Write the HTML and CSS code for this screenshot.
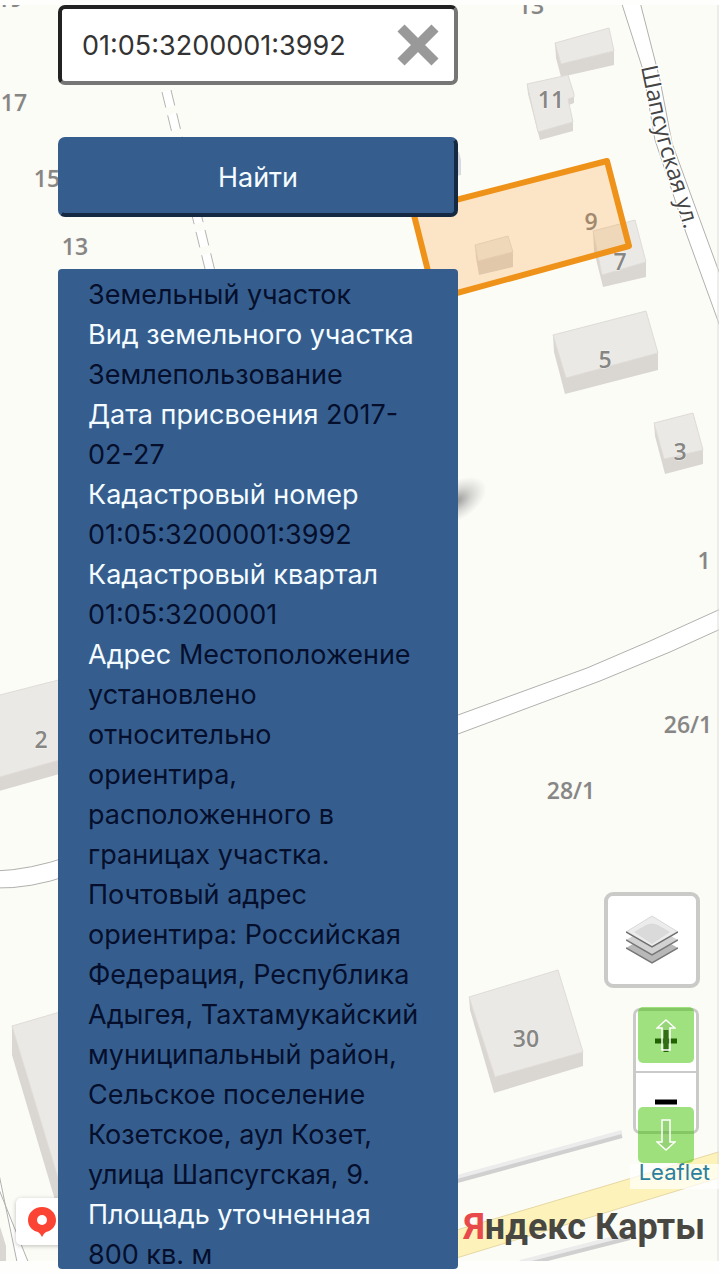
FILE: index.html
```html
<!DOCTYPE html>
<html lang="ru">
<head>
  <meta charset="UTF-8">
  <meta name="viewport" content="width=device-width, initial-scale=1.0">
  <title>Кадастровая карта</title>
  <link rel="stylesheet" href="styles.css">
</head>
<body>
  <div class="page">
    <svg class="map" viewBox="0 0 719 1273" preserveAspectRatio="xMinYMin slice" role="img" aria-label="Карта">
      <defs>
        <clipPath id="tiles"><rect x="0" y="5" width="719" height="1256"/></clipPath>
        <radialGradient id="shadow">
          <stop offset="0" stop-color="#888" stop-opacity="0.9"/>
          <stop offset="0.5" stop-color="#999" stop-opacity="0.4"/>
          <stop offset="1" stop-color="#aaa" stop-opacity="0"/>
        </radialGradient>
        <path id="street" d="M641 67 C648 100 652 122 660 150 S678 205 686 236"/>
      </defs>
      <rect class="land" x="0" y="5" width="719" height="1256"/>

      <g clip-path="url(#tiles)">
        <!-- Roads -->
        <g class="road">
          <path d="M620 -2 L643 70 L655 140 L685 230 L722 332 L722 280 L700 220 L672 143 L660 80 L639 -2 Z"/>
          <path d="M440 722 L458 715 L587 668 L650 641 L725 607 L725 627 L670 652 L600 681 L458 734 L440 741 Z"/>
          <path d="M-5 871 Q30 870 70 856 L70 875 Q30 889 -5 888 Z"/>
          <path d="M-8 1140 L17 1262 L29 1264 L-8 1172 Z"/>
        </g>
        <g class="track">
          <path class="track-fill" d="M166 91 L211 276"/>
          <path d="M162 92 L206 273"/>
          <path d="M171 90 L215 271"/>
        </g>
        <path class="highway" d="M440 1235 L632 1178 L725 1150 L725 1176 L683 1189 L440 1263 Z"/>
        <g class="wall">
          <path class="wall-light" d="M450 1179 L622 1132"/>
          <path class="wall-dark" d="M450 1183 L622 1136"/>
          <path class="wall-light" d="M520 1262 L630 1234"/>
          <path class="wall-dark" d="M520 1266 L630 1238"/>
        </g>

        <!-- Buildings: side first, roof over it -->
        <g class="side">
          <path d="M555 43 L556 58 L561 77 L614 65 L614 51 Z"/>
          <path d="M527 84 L528 94 L540 140 L573 131 L573 122 L569 105 L574 103 L574 94 Z"/>
          <path d="M475 245 L476 258 L479 275 L513 267 L513 252 Z"/>
          <path d="M593 231 L594 251 L603 287 L646 277 L646 262 Z"/>
          <path d="M553 335 L554 352 L565 394 L658 370 L658 353 Z"/>
          <path d="M654 423 L655 436 L665 474 L703 464 L703 450 Z"/>
          <path d="M469 997 L470 1010 L494 1093 L583 1066 L583 1052 Z"/>
          <path d="M-4 778 L70 757 L70 771 L-4 792 Z"/>
          <path d="M12 1026 L12 1055 L55 1200 L70 1245 L70 1216 Z"/>
          <path d="M-2 1220 L6 1246 L6 1264 L-2 1264 Z"/>
          <path class="shade" d="M452 150 L459 152 L461 160 L461 175 L452 177 Z"/>
        </g>
        <g class="roof">
          <path d="M555 43 L609 28 L614 51 L561 64 Z"/>
          <path d="M527 84 L568 75 L574 94 L574 97 L568 99 L573 122 L538 132 Z"/>
          <path d="M475 245 L508 236 L513 252 L478 261 Z"/>
          <path d="M593 231 L635 220 L646 262 L602 275 Z"/>
          <path d="M553 335 L646 311 L658 353 L566 378 Z"/>
          <path d="M654 423 L693 413 L703 450 L664 459 Z"/>
          <path d="M469 997 L558 970 L583 1052 L495 1077 Z"/>
          <path d="M-4 696 L70 677 L70 757 L-4 778 Z"/>
          <path d="M12 1026 L70 1009 L70 1218 Z"/>
        </g>
        <ellipse cx="456" cy="501" rx="34" ry="19" fill="url(#shadow)" transform="rotate(-32 456 501)"/>

        <g class="house">
          <text x="10" y="7">19</text>
          <text x="531" y="14">13</text>
          <text x="14" y="111">17</text>
          <text x="47" y="187">15</text>
          <text x="75" y="255">13</text>
          <text x="551" y="108">11</text>
          <text x="591" y="230">9</text>
          <text x="620" y="270">7</text>
          <text x="605" y="368">5</text>
          <text x="680" y="460">3</text>
          <text x="704" y="569">1</text>
          <text x="688" y="733">26/1</text>
          <text x="571" y="799">28/1</text>
          <text x="526" y="1047">30</text>
          <text x="41" y="748">2</text>
        </g>
        <text class="street"><textPath href="#street">Шапсугская ул.</textPath></text>

        <path class="parcel" d="M607 161 L629 246 L435 299 L413 211 Z"/>
      </g>
      <path class="edge" d="M718 5 V1261"/>
    </svg>

    <button class="pin" type="button" aria-label="Открыть в Яндекс Картах">
      <svg viewBox="0 0 28 30" width="28" height="30">
        <path d="M14 0 C6 0 0 6 0 13 C0 20 5 24 10 25 Q12 26 14 30 Q16 26 18 25 C23 24 28 20 28 13 C28 6 22 0 14 0 Z" fill="#fb4434"/>
        <circle cx="14" cy="13" r="5" fill="#fff"/>
      </svg>
    </button>

    <main class="sidebar">
      <form class="search" onsubmit="return false">
        <div class="search-box">
          <input type="text" name="number" aria-label="Кадастровый номер" value="01:05:3200001:3992">
          <button class="clear" type="reset" aria-label="Очистить">
            <svg viewBox="0 0 42 42" width="42" height="42">
              <path d="M4 4 L38 38 M38 4 L4 38" stroke="#999" stroke-width="10"/>
            </svg>
          </button>
        </div>
        <button class="find" type="submit">Найти</button>
      </form>

      <div class="info">
        <p>Земельный участок</p>
        <p><span>Вид земельного участка</span> Землепользование</p>
        <p><span>Дата присвоения</span> 2017-02-27</p>
        <p><span>Кадастровый номер</span> 01:05:3200001:3992</p>
        <p><span>Кадастровый квартал</span> 01:05:3200001</p>
        <p><span>Адрес</span> Местоположение установлено относительно ориентира, расположенного в границах участка. Почтовый адрес ориентира: Российская Федерация, Республика Адыгея, Тахтамукайский муниципальный район, Сельское поселение Козетское, аул Козет, улица Шапсугская, 9.</p>
        <p><span>Площадь уточненная</span> 800 кв. м</p>
      </div>
    </main>

    <div class="controls">
      <button class="layers" type="button" aria-label="Слои">
        <svg viewBox="0 0 52 50" width="52" height="50">
          <path d="M0 33 L26 18 L52 33 L26 48 Z" fill="#b8b8b8"/>
          <path d="M0 33 L26 48 L52 33" fill="none" stroke="#777" stroke-width="1.5"/>
          <path d="M0 25 L26 10 L52 25 L26 40 Z" fill="#d2d2d2"/>
          <path d="M0 25 L26 40 L52 25" fill="none" stroke="#777" stroke-width="1.5"/>
          <path d="M0 17 L26 1 L52 17 L26 32 Z" fill="#ececec" stroke="#d8d8d8"/>
          <path d="M8 17 L20 10 Q26 7 32 10 L44 17 L26 29 Z" fill="#dadada"/>
          <path d="M0 17 L26 32 L52 17" fill="none" stroke="#707070" stroke-width="1.5"/>
        </svg>
      </button>

      <div class="zoom">
        <button type="button" aria-label="Приблизить">
          <svg viewBox="0 0 22 22" width="22" height="22"><path d="M0 11 H22 M11 0 V22" stroke="#000" stroke-width="5"/></svg>
        </button>
        <button type="button" aria-label="Отдалить">
          <svg viewBox="0 0 22 22" width="22" height="22"><path d="M0 11 H22" stroke="#000" stroke-width="5"/></svg>
        </button>
        <a class="scroll scroll-up" href="#top" aria-label="Наверх">
          <svg viewBox="0 0 20 32" width="20" height="32"><path d="M10 1 L19 9 H14 V31 H6 V9 H1 Z"/></svg>
        </a>
        <a class="scroll scroll-down" href="#bottom" aria-label="Вниз">
          <svg viewBox="0 0 20 32" width="20" height="32"><path d="M10 31 L19 23 H14 V1 H6 V23 H1 Z"/></svg>
        </a>
      </div>

      <a class="leaflet" href="https://leafletjs.com">Leaflet</a>
    </div>

    <div class="brand"><span>Я</span>ндекс Карты</div>
  </div>
</body>
</html>
```

FILE: styles.css
```css
/* Reset and Base Styles */
* {
  margin: 0;
  padding: 0;
  box-sizing: border-box;
}

body {
  font-family: 'Inter', 'Open Sans', sans-serif;
  background: #fefefc;
}

.page {
  position: relative;
  display: grid;
  height: 100vh;
  overflow: hidden;
}

button {
  font: inherit;
  cursor: pointer;
}

/* Map */
.map {
  grid-area: 1 / 1;
  width: 100%;
  height: 100vh;
}

.land {
  fill: #fcfcf7;
}

.road path {
  fill: #fff;
  stroke: #b0b0ae;
}

.track path {
  fill: none;
  stroke: #b4b4b2;
  stroke-dasharray: 16 8;
}

.track .track-fill {
  stroke: #fff;
  stroke-width: 8;
}

.highway {
  fill: #fdf3ba;
  stroke: #e6d7a4;
}

.wall path {
  fill: none;
  stroke-width: 4;
}

.wall .wall-light {
  stroke: #ececec;
}

.wall .wall-dark {
  stroke: #d0d0d0;
}

.side path {
  fill: #dad6d2;
}

.side .shade {
  fill: #d8d8e2;
}

.roof path {
  fill: #ebe9e5;
  stroke: #dfdcd8;
}

.house text {
  font-family: 'Open Sans', sans-serif;
  font-size: 23px;
  font-weight: 600;
  text-anchor: middle;
  fill: #868684;
  stroke: #f6f5f1;
  stroke-width: 1px;
  paint-order: stroke;
}

.street {
  font-family: 'Open Sans', sans-serif;
  font-size: 23px;
  font-weight: 500;
  fill: #444;
  stroke: #fff;
  stroke-width: 3px;
  paint-order: stroke;
}

.parcel {
  fill: #ff9620;
  fill-opacity: 0.22;
  stroke: #ee9219;
  stroke-width: 6;
  stroke-linejoin: round;
}

.edge {
  stroke: #dcdcda;
}

/* Search and info */
.sidebar {
  grid-area: 1 / 1;
  z-index: 1;
  display: flex;
  flex-direction: column;
  gap: 52px;
  width: 400px;
  max-width: 90%;
  height: 100vh;
  margin-left: 58px;
  padding: 5px 0 4px;
}

.search {
  display: flex;
  flex-direction: column;
  gap: 52px;
}

.search-box {
  display: flex;
  align-items: center;
  height: 80px;
  padding: 0 15px 0 20px;
  border: 4px solid;
  border-color: #222 #767676 #767676 #222;
  border-radius: 7px;
  background: #fff;
}

.search-box input {
  flex: 1;
  min-width: 0;
  border: none;
  outline: none;
  background: none;
  font: inherit;
  font-size: 27px;
  color: #333;
}

.clear {
  display: flex;
  border: none;
  background: none;
}

.find {
  height: 80px;
  border: 4px solid;
  border-color: #355e8f #152a42 #152a42 #355e8f;
  border-radius: 7px;
  background: #355e8f;
  color: #f4fcff;
  font-size: 27px;
}

.info {
  flex: 1;
  min-height: 0;
  overflow: hidden;
  padding: 6px 30px 0;
  border-radius: 4px;
  background: #355e8f;
  color: #050f2c;
  font-size: 27px;
  line-height: 40px;
}

.info span {
  color: #f4fcff;
}

/* Map controls */
.controls {
  position: absolute;
  right: 0;
  bottom: 84px;
  display: flex;
  flex-direction: column;
  align-items: flex-end;
}

.layers {
  display: flex;
  align-items: center;
  justify-content: center;
  width: 96px;
  height: 96px;
  margin: 0 19px 20px 0;
  border: 4px solid #cacac8;
  border-radius: 9px;
  background: #fff;
}

.zoom {
  position: relative;
  width: 66px;
  margin: 0 20px 30px 0;
  border: 3px solid #cacac8;
  border-radius: 7px;
  background: #fff;
}

.zoom button {
  display: flex;
  align-items: center;
  justify-content: center;
  width: 100%;
  height: 60px;
  border: none;
  background: none;
}

.zoom button + button {
  border-top: 2px solid #cacac8;
}

.scroll {
  position: absolute;
  left: 2px;
  display: flex;
  align-items: center;
  justify-content: center;
  width: 56px;
  height: 56px;
  border-radius: 5px;
  background: rgba(64, 196, 0, 0.5);
}

.scroll-up {
  top: -4px;
}

.scroll-down {
  top: 96px;
}

.scroll path {
  fill: rgba(120, 160, 100, 0.2);
  stroke: #fff;
  stroke-width: 1.5;
}

.leaflet {
  padding: 0 9px 9px;
  background: rgba(255, 255, 255, 0.7);
  color: #2a7f9e;
  font-size: 22px;
  line-height: 16px;
  text-decoration: none;
}

.brand {
  position: absolute;
  right: 14px;
  bottom: 20px;
  color: #484742;
  font-family: 'Roboto', sans-serif;
  font-size: 36px;
  font-weight: 700;
  line-height: 52px;
}

.brand span {
  color: #e84a4c;
}

.pin {
  position: absolute;
  left: 16px;
  bottom: 28px;
  display: flex;
  align-items: center;
  width: 60px;
  height: 47px;
  padding-left: 12px;
  border: none;
  border-radius: 5px;
  background: #fff;
  box-shadow: 0 1px 4px rgba(0, 0, 0, 0.25);
}
```
